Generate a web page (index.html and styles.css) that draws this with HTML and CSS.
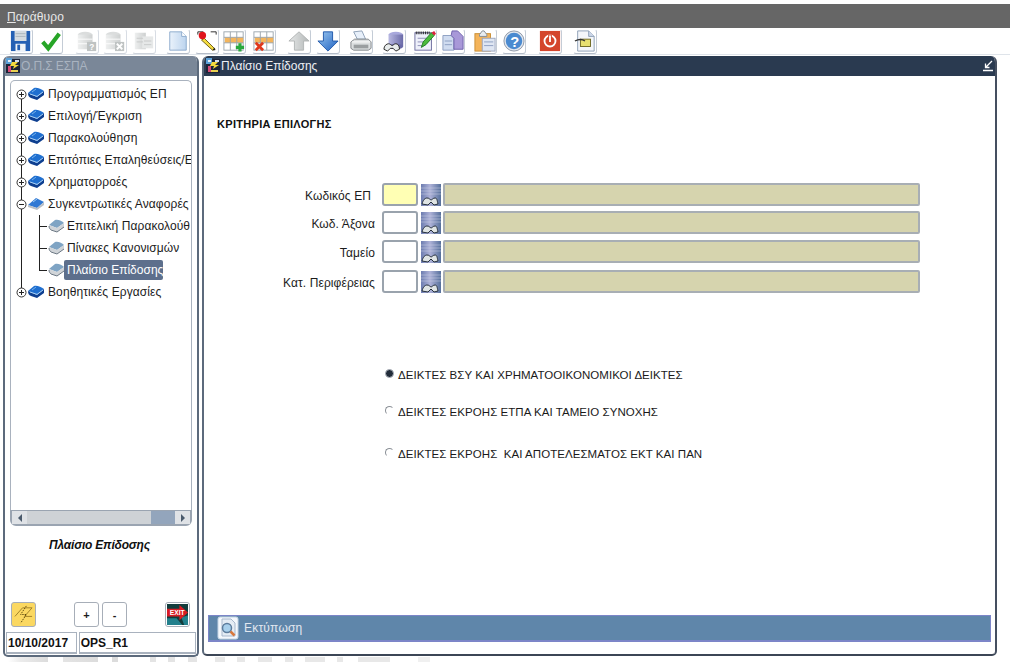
FILE: index.html
```html
<!DOCTYPE html>
<html lang="el">
<head>
<meta charset="utf-8">
<title>Πλαίσιο Επίδοσης</title>
<link rel="stylesheet" href="styles.css">
</head>
<body>
<svg class="defs" aria-hidden="true">
  <defs>
    <linearGradient id="gGrey" x1="0" y1="0" x2="1" y2="0"><stop offset="0" stop-color="#e6e8e8"/><stop offset="1" stop-color="#b4b8b8"/></linearGradient>
    <linearGradient id="gDb" x1="0" y1="0" x2="1" y2="0"><stop offset="0" stop-color="#b9b9e2"/><stop offset="1" stop-color="#6a6aa8"/></linearGradient>
    <linearGradient id="gBlue" x1="0" y1="0" x2="1" y2="1"><stop offset="0" stop-color="#9cc8f0"/><stop offset="1" stop-color="#1c5fc0"/></linearGradient>
    <linearGradient id="gPage" x1="0" y1="0" x2="1" y2="0"><stop offset="0" stop-color="#eaf2fb"/><stop offset="1" stop-color="#bcd4ee"/></linearGradient>
    <linearGradient id="gLook" x1="0" y1="0" x2="1" y2="0"><stop offset="0" stop-color="#6c7cb0"/><stop offset=".45" stop-color="#aeb2d8"/><stop offset="1" stop-color="#56709c"/></linearGradient>
    <symbol id="logo" viewBox="0 0 16 16">
      <rect x="1" y="1" width="14" height="14" fill="#1d2438"/>
      <path d="M1 0h6v6H1Z" fill="#5aa0d8"/>
      <path d="M3 2h3v2H3Z" fill="#e8f0f8"/>
      <path d="M7 4h6l-3 3h4l-6 4 1-3H5Z" fill="#f4d83c"/>
      <path d="M3 8h3v6H3Z" fill="#d84a78"/>
      <path d="M6 12h7v2H6Z" fill="#e8d050"/>
      <path d="M10 2h4v2h-4Z" fill="#d8e0f0"/>
    </symbol>
    <symbol id="book" viewBox="0 0 18 14">
      <path d="M1 6 7 1c3-1 7 1 10 3l-7 6Z" fill="#1f6fd0"/>
      <path d="M1 6c0 3 1 4 3 5l6 2 7-5V4l-7 6Z" fill="#0e3f90"/>
      <path d="M3 7l7 2.400 6-4.400" fill="none" stroke="#a8d0f4"/>
      <path d="M5 5l4-3" stroke="#7ab4ec"/>
    </symbol>
    <symbol id="bookOpen" viewBox="0 0 18 14">
      <path d="M1 8 9 1l8 4-7 6Z" fill="#2f78d4"/>
      <path d="M1 8l9 3 7-6v3l-7 5-9-3Z" fill="#b9bfc6"/>
      <path d="M6 5l4-3" stroke="#9cc8f0"/>
    </symbol>
    <symbol id="page" viewBox="0 0 18 14">
      <path d="M2 6 8 1c3-1 7 1 9 3l-7 5Z" fill="#7fa4c4"/>
      <path d="M2 6l8 3 7-5v4l-7 5-6-2c-2-1-2-3-2-5Z" fill="#d0d4d8"/>
      <path d="M2 7c0 2 1 3 2 4l6 2 7-5" fill="none" stroke="#6c7884"/>
    </symbol>
    <symbol id="plus" viewBox="0 0 11 11">
      <circle cx="5.500" cy="5.500" r="4.500" fill="#fff" stroke="#333"/>
      <path d="M3 5.500h5M5.500 3v5" stroke="#222"/>
    </symbol>
    <symbol id="minus" viewBox="0 0 11 11">
      <circle cx="5.500" cy="5.500" r="4.500" fill="#fff" stroke="#333"/>
      <path d="M3 5.500h5" stroke="#222"/>
    </symbol>
    <symbol id="look" viewBox="0 0 20 22">
      <rect width="20" height="22" fill="url(#gLook)"/>
      <path d="M0 4h20M0 7h20M0 10h20" stroke="#d0d6e8" stroke-width=".7" opacity=".7"/>
      <path d="M1 20c1-4 3-6 5-6 3 0 3 2 4 2s2-2 4-2 2 2 3 6l-4 1-3-3-3 3Z" fill="#dfe4e4" stroke="#26303c" stroke-width="1"/>
    </symbol>
  </defs>
</svg>

<header class="menubar"><span class="menu-label"><u>Π</u>αράθυρο</span></header>

<nav class="toolbar">
  <span class="tb">
    <svg viewBox="0 0 24 24"><path d="M1 1h21v22H1Z" fill="#2460b4"/><rect x="5" y="1" width="13" height="11" fill="#d4dbe0"/><path d="M6 4h11M6 7h11" stroke="#a8b4bc"/><rect x="6" y="15" width="11" height="8" fill="#f0f4f8"/><rect x="8" y="16" width="3" height="6" fill="#2460b4"/></svg>
  </span>
  <span class="tb m6">
    <svg viewBox="0 0 24 24"><path d="M3 13l6 7L21 4" fill="none" stroke="#27a527" stroke-width="4.500"/></svg>
  </span>
  <span class="tb m12 dim">
    <svg viewBox="0 0 24 24"><ellipse cx="10" cy="5" rx="8" ry="3" fill="#c8cccc"/><rect x="2" y="5" width="16" height="16" fill="url(#gGrey)"/><path d="M2 10h16M2 15h16" stroke="#fff"/><rect x="12" y="13" width="10" height="10" fill="#9ea4a4"/><text class="qm" x="14.500" y="22">?</text></svg>
  </span>
  <span class="tb m4 dim">
    <svg viewBox="0 0 24 24"><ellipse cx="10" cy="5" rx="8" ry="3" fill="#c8cccc"/><rect x="2" y="5" width="16" height="16" fill="url(#gGrey)"/><path d="M2 10h16M2 15h16" stroke="#fff"/><rect x="12" y="13" width="10" height="10" fill="#9ea4a4"/><path d="M14 15l6 6M20 15l-6 6" stroke="#fff" stroke-width="2"/></svg>
  </span>
  <span class="tb m5 dim">
    <svg viewBox="0 0 24 24"><rect x="2" y="3" width="12" height="18" fill="url(#gGrey)"/><rect x="10" y="7" width="12" height="13" fill="#dadddd"/><path d="M4 9h7M4 13h7M12 12h8M12 16h8" stroke="#a8acac"/></svg>
  </span>
  <span class="tb m10">
    <svg viewBox="0 0 24 24"><path d="M3 2h13l5 5v15H3Z" fill="url(#gPage)" stroke="#8aa8cc"/><path d="M16 2v5h5" fill="#fff" stroke="#8aa8cc"/></svg>
  </span>
  <span class="tb m5">
    <svg viewBox="0 0 24 24"><path d="M2 5V2h6M16 2h6v3" fill="none" stroke="#222"/><path d="M9 9l12 12-3 1-12-11Z" fill="#f4dc40" stroke="#6a5a10"/><circle cx="7" cy="6" r="4" fill="#e0141c"/><path d="M18 22l3 0-1-3Z" fill="#222"/></svg>
  </span>
  <span class="tb m3">
    <svg viewBox="0 0 24 24"><rect x="1" y="2" width="21" height="20" fill="#fff" stroke="#9aa4ac"/><rect x="2" y="8" width="20" height="6" fill="#f4b55c"/><path d="M8 2v20M15 2v20M1 8h21M1 14h21" stroke="#9aa4ac"/><path d="M14 19h9M18.500 14.500v9" stroke="#2aa83c" stroke-width="3.500"/></svg>
  </span>
  <span class="tb m6">
    <svg viewBox="0 0 24 24"><rect x="1" y="2" width="21" height="20" fill="#fff" stroke="#9aa4ac"/><rect x="2" y="8" width="20" height="6" fill="#f4b55c"/><path d="M8 2v20M15 2v20M1 8h21M1 14h21" stroke="#9aa4ac"/><path d="M3 14l8 8M11 14l-8 8" stroke="#e0381c" stroke-width="3"/></svg>
  </span>
  <span class="tb m11">
    <svg viewBox="0 0 24 24"><path d="M12 2 23 12h-6v10H7V12H1Z" fill="url(#gGrey)" stroke="#b0b4b4"/></svg>
  </span>
  <span class="tb m5">
    <svg viewBox="0 0 24 24"><path d="M7 2h10v10h6L12 23 1 12h6Z" fill="url(#gBlue)" stroke="#1c55a8"/></svg>
  </span>
  <span class="tb m9">
    <svg viewBox="0 0 24 24"><path d="M4 2l9-1 4 9H8Z" fill="#e8f0fa" stroke="#8a9cb4"/><path d="M1 13l4-3h15l3 3v7l-3 2H4l-3-2Z" fill="#dcdfe0" stroke="#7c8084"/><path d="M2 13h20" stroke="#fff"/><rect x="4" y="16" width="16" height="4" fill="#9a9ea0"/></svg>
  </span>
  <span class="tb m9">
    <svg viewBox="0 0 24 24"><ellipse cx="14" cy="5" rx="8" ry="3" fill="#a8a8dc"/><rect x="6" y="5" width="16" height="13" fill="url(#gDb)"/><ellipse cx="14" cy="18" rx="8" ry="3" fill="#6a6aa8"/><path d="M1 21c0-4 3-6 5-6s3 2 4 2 2-2 4-2 4 2 4 6l-4 2-3-3-3 0-3 3Z" fill="#e8ecec" stroke="#222"/></svg>
  </span>
  <span class="tb m7">
    <svg viewBox="0 0 24 24"><rect x="1" y="3" width="18" height="19" fill="#eef0fa" stroke="#6a6a9c"/><path d="M2 3h16" stroke="#222" stroke-width="3" stroke-dasharray="1 1"/><path d="M4 9h10M4 13h7M4 17h7" stroke="#8a8ab4"/><path d="M8 19l2-6 9-10 3 3-9 10Z" fill="#4cbc3c" stroke="#1e7a20"/><path d="M19 3l3 3 2-2-2-3Z" fill="#d8243c"/></svg>
  </span>
  <span class="tb m4">
    <svg viewBox="0 0 24 24"><path d="M1 6h9l3 3v13H1Z" fill="#d0dcf0" stroke="#8a9cc0"/><path d="M11 1l6 0 6 6v14H13V9L10 6Z" fill="#a898d8" stroke="#6a5ca8"/><path d="M3 12h8M3 16h8" stroke="#8a9cc0"/></svg>
  </span>
  <span class="tb m8">
    <svg viewBox="0 0 24 24"><rect x="1" y="4" width="17" height="19" fill="#f4b45a" stroke="#c88c30"/><path d="M6 5l3-4h2l3 4v2H6Z" fill="#e8ecf0" stroke="#808890"/><rect x="9" y="9" width="14" height="14" fill="#dfe6f2" stroke="#9aa4bc"/><path d="M11 13h10M11 17h10" stroke="#8a9cc0"/></svg>
  </span>
  <span class="tb m5">
    <svg viewBox="0 0 24 24"><circle cx="12" cy="12" r="11" fill="#e0e6ee" stroke="#8a94a4"/><circle cx="12" cy="12" r="9" fill="#4a8ad0"/><text class="help" x="8" y="18">?</text></svg>
  </span>
  <span class="tb m12">
    <svg viewBox="0 0 24 24"><rect x="1" y="1" width="22" height="22" fill="#d4452c"/><circle cx="12" cy="12" r="6" fill="none" stroke="#fff" stroke-width="2"/><path d="M12 5v8" stroke="#d4452c" stroke-width="4"/><path d="M12 6v7" stroke="#fff" stroke-width="2"/></svg>
  </span>
  <span class="tb m11">
    <svg viewBox="0 0 24 24"><path d="M4 1h12l6 6v16H4Z" fill="#f4f6fa" stroke="#8a9cb4"/><path d="M16 1v6h6" fill="#cdd8ea" stroke="#8a9cb4"/><rect x="7" y="10" width="11" height="8" fill="#e8e070" stroke="#6a6420"/><path d="M1 12c4-2 8-2 11 0" fill="none" stroke="#333" stroke-width="1.500"/></svg>
  </span>
</nav>

<main class="desktop">
  <section class="win win-left">
    <div class="titlebar titlebar-off">
      <svg class="logo"><use href="#logo"/></svg>
      <span>Ο.Π.Σ ΕΣΠΑ</span>
    </div>
    <div class="left-body">
      <div class="tree">
        <ul class="tree-list">
          <li class="node"><svg class="exp"><use href="#plus"/></svg><svg class="ic"><use href="#book"/></svg><span class="lbl">Προγραμματισμός ΕΠ</span></li>
          <li class="node"><svg class="exp"><use href="#plus"/></svg><svg class="ic"><use href="#book"/></svg><span class="lbl">Επιλογή/Έγκριση</span></li>
          <li class="node"><svg class="exp"><use href="#plus"/></svg><svg class="ic"><use href="#book"/></svg><span class="lbl">Παρακολούθηση</span></li>
          <li class="node"><svg class="exp"><use href="#plus"/></svg><svg class="ic"><use href="#book"/></svg><span class="lbl">Επιτόπιες Επαληθεύσεις/Ε</span></li>
          <li class="node"><svg class="exp"><use href="#plus"/></svg><svg class="ic"><use href="#book"/></svg><span class="lbl">Χρηματορροές</span></li>
          <li class="node"><svg class="exp"><use href="#minus"/></svg><svg class="ic"><use href="#bookOpen"/></svg><span class="lbl">Συγκεντρωτικές Αναφορές</span></li>
          <li class="node child"><svg class="ic"><use href="#page"/></svg><span class="lbl">Επιτελική Παρακολούθ</span></li>
          <li class="node child"><svg class="ic"><use href="#page"/></svg><span class="lbl">Πίνακες Κανονισμών</span></li>
          <li class="node child last"><svg class="ic"><use href="#page"/></svg><span class="lbl sel">Πλαίσιο Επίδοσης</span></li>
          <li class="node"><svg class="exp"><use href="#plus"/></svg><svg class="ic"><use href="#book"/></svg><span class="lbl">Βοηθητικές Εργασίες</span></li>
        </ul>
      </div>
      <div class="hscroll">
        <span class="arrow"><i class="tri tri-l"></i></span>
        <span class="track"></span>
        <span class="thumb"></span>
        <span class="arrow"><i class="tri tri-r"></i></span>
      </div>
      <p class="current">Πλαίσιο Επίδοσης</p>
      <div class="actions">
        <span class="btn btn-yellow">
          <svg viewBox="0 0 22 22"><path d="M2 13 10 4h10l-8 9h8" fill="none" stroke="#a08028"/><path d="M14 2 8 11h6l-6 9" fill="none" stroke="#604c10" stroke-dasharray="1.500 1"/></svg>
        </span>
        <span class="btn btn-txt btn-plus">+</span>
        <span class="btn btn-txt">-</span>
        <span class="btn btn-exit">
          <svg viewBox="0 0 22 22"><rect width="22" height="22" fill="#123c3c"/><path d="M0 15h10l6 7H0ZM15 14l7-2v10h-4Z" fill="#22808c"/><path d="M0 5h13V1l9 8-9 8v-4H0Z" fill="#d81c24"/><text class="exit-txt" x="3" y="12">EXIT</text></svg>
        </span>
      </div>
      <div class="status">
        <span class="st st-date">10/10/2017</span>
        <span class="st st-user">OPS_R1</span>
      </div>
    </div>
  </section>

  <section class="win win-right">
    <div class="titlebar">
      <svg class="logo"><use href="#logo"/></svg>
      <span>Πλαίσιο Επίδοσης</span>
      <svg class="restore" viewBox="0 0 12 12"><path d="M10 1 4 7M3.500 3.500v4h4" fill="none" stroke="#fff" stroke-width="1.300"/><path d="M1 10.500h10" stroke="#fff" stroke-width="1.500"/></svg>
    </div>
    <div class="right-body">
      <h1 class="heading">ΚΡΙΤΗΡΙΑ ΕΠΙΛΟΓΗΣ</h1>
      <div class="form">
        <div class="row"><label class="flabel flabel-first">Κωδικός ΕΠ</label><span class="inp inp-req"></span><svg class="lov"><use href="#look"/></svg><span class="desc"></span></div>
        <div class="row r2"><label class="flabel">Κωδ. Άξονα</label><span class="inp"></span><svg class="lov"><use href="#look"/></svg><span class="desc"></span></div>
        <div class="row r3"><label class="flabel">Ταμείο</label><span class="inp"></span><svg class="lov"><use href="#look"/></svg><span class="desc"></span></div>
        <div class="row r4"><label class="flabel">Κατ. Περιφέρειας</label><span class="inp"></span><svg class="lov"><use href="#look"/></svg><span class="desc"></span></div>
      </div>
      <div class="radios">
        <div class="radio"><i class="dot on"></i><span>ΔΕΙΚΤΕΣ ΒΣΥ ΚΑΙ ΧΡΗΜΑΤΟΟΙΚΟΝΟΜΙΚΟΙ ΔΕΙΚΤΕΣ</span></div>
        <div class="radio rb"><i class="dot"></i><span>ΔΕΙΚΤΕΣ ΕΚΡΟΗΣ ΕΤΠΑ ΚΑΙ ΤΑΜΕΙΟ ΣΥΝΟΧΗΣ</span></div>
        <div class="radio rc"><i class="dot"></i><span>ΔΕΙΚΤΕΣ ΕΚΡΟΗΣ&nbsp; ΚΑΙ ΑΠΟΤΕΛΕΣΜΑΤΟΣ ΕΚΤ ΚΑΙ ΠΑΝ</span></div>
      </div>
      <div class="printbar">
        <svg class="print-ic" viewBox="0 0 22 24"><rect x="1" y="1" width="20" height="22" rx="2" fill="#f4f8fc" stroke="#c4d4e4"/><path d="M5 3h9l4 4v13H5Z" fill="#e4ecf4" stroke="#a8b8cc"/><circle cx="10" cy="12" r="4.500" fill="#a8d0ec" stroke="#5c7c9c" stroke-width="1.500"/><path d="M13.500 15.500l4 4" stroke="#d8783c" stroke-width="2.500"/></svg>
        <span>Εκτύπωση</span>
      </div>
    </div>
  </section>
</main>
<div class="strip"></div>
</body>
</html>
```
FILE: styles.css
```css
* { box-sizing: border-box; }
html, body { margin: 0; height: 662px; overflow: hidden; background: #fff; }
body { font: 12px "Liberation Sans", Arial, sans-serif; color: #1c1c1c; display: flex; flex-direction: column; }
.defs { width: 0; height: 0; position: absolute; }

.menubar { margin-top: 4px; height: 24px; background: #666; color: #e8e8e8; display: flex; align-items: center; padding: 2px 0 0 7px; flex: none; }
.menu-label { font-size: 12px; letter-spacing: .1px; }

.toolbar { height: 27px; flex: none; display: flex; align-items: center; padding-left: 9px; border-bottom: 1px solid #dfe4ea; }
.tb { width: 24px; height: 25px; flex: none; border: 1px solid transparent; border-right-color: #c4ccd6; border-bottom-color: #b4bcc8; border-radius: 3px; display: flex; align-items: center; justify-content: center; }
.tb svg { width: 22px; height: 22px; display: block; }
.dim { opacity: .65; }
.m3 { margin-left: 3px; } .m4 { margin-left: 4px; } .m5 { margin-left: 5px; } .m6 { margin-left: 6px; }
.m7 { margin-left: 7px; } .m8 { margin-left: 8px; } .m9 { margin-left: 9px; } .m10 { margin-left: 10px; }
.m11 { margin-left: 11px; } .m12 { margin-left: 12px; }
.qm { font: bold 9px "Liberation Sans", sans-serif; fill: #fff; }
.help { font: bold 16px "Liberation Sans", sans-serif; fill: #fff; }
.exit-txt { font: bold 7px "Liberation Sans", sans-serif; fill: #fff; }

.desktop { flex: none; height: 602px; display: flex; gap: 3px; padding: 1px 0 0 3px; }
.win { display: flex; flex-direction: column; background: #fff; border: 2px solid #5c6a7c; border-top: 0; border-radius: 6px 6px 5px 5px; overflow: hidden; }
.win-left { width: 196px; height: 601px; }
.win-right { width: 795px; height: 600px; border-right-color: #454f60; border-bottom-color: #3c4656; }

.titlebar { height: 20px; flex: none; background: #2a3a50; color: #eef0f4; display: flex; align-items: center; gap: 0; padding-left: 1px; }
.titlebar-off { background: #7a8798; color: #a9b3c0; padding-left: 0; letter-spacing: -.1px; }
.logo { width: 16px; height: 16px; flex: none; }
.restore { width: 12px; height: 12px; margin-left: auto; margin-right: 1px; }

.left-body { flex: 1; display: flex; flex-direction: column; padding: 4px 1px 1px; min-height: 0; }
.tree { margin: 0 4px; height: 430px; border: 1px solid #a9b2be; border-bottom: 0; border-radius: 5px 5px 0 0; overflow: hidden; flex: none; padding-top: 2px; }
.tree-list { list-style: none; margin: 0; padding: 0; position: relative; }
.tree-list::before { content: ""; position: absolute; left: 10px; top: 12px; height: 198px; border-left: 1px solid #222; }
.node { height: 22px; display: flex; align-items: center; white-space: nowrap; position: relative; padding-left: 5px; }
.exp { width: 11px; height: 11px; flex: none; position: relative; }
.ic { width: 18px; height: 14px; flex: none; position: relative; }
.lbl { margin-left: 2px; padding: 0 1px; letter-spacing: .1px; height: 20px; line-height: 20px; font-size: 12px; }
.child { padding-left: 36px; }
.child .lbl { margin-left: -1px; padding-left: 3px; }
.child::before { content: ""; position: absolute; left: 28px; top: 11px; width: 8px; border-top: 1px solid #222; }
.child::after { content: ""; position: absolute; left: 28px; top: 0; height: 22px; border-left: 1px solid #222; }
.last::after { height: 12px; }
.sel { background: #5d6f8c; color: #fff; border-radius: 2px; letter-spacing: 0; padding-right: 0; }

.hscroll { margin: 0 4px; height: 16px; flex: none; display: flex; background: #cfd3d7; border: 2px solid #9aa4b1; border-top-width: 1px; border-radius: 0 0 6px 6px; }
.arrow { width: 15px; background: #dfe2e6; display: flex; align-items: center; justify-content: center; }
.track { flex: 1; background: #ced2d6; }
.thumb { width: 24px; background: #93a5bc; }
.tri { width: 0; height: 0; border: 4px solid transparent; }
.tri-l { border-right-color: #4a5a6c; border-left: 0; }
.tri-r { border-left-color: #4a5a6c; border-right: 0; }

.current { margin: 12px 0 0; text-align: center; font: italic bold 12px "Liberation Sans", sans-serif; letter-spacing: -.2px; color: #111; height: 14px; line-height: 14px; padding-right: 3px; }
.actions { display: flex; margin: 50px 0 0 5px; flex: none; }
.btn { width: 25px; height: 25px; border: 1px solid #a7aeb8; border-radius: 3px; display: flex; align-items: center; justify-content: center; flex: none; background: #fff; }
.btn svg { width: 21px; height: 21px; display: block; }
.btn-yellow { background: #fbd861; }
.btn-txt { margin-left: 3px; font-weight: bold; font-size: 11px; }
.btn-txt.btn-plus { margin-left: 38px; }
.btn-exit { margin-left: 38px; }
.status { margin: 5px 0 0; display: flex; gap: 2px; flex: none; }
.st { height: 22px; border: 1px solid #a9b2be; border-bottom: 2px solid #a9b2be; font-weight: bold; font-size: 12px; line-height: 20px; padding-left: 1px; color: #111; }
.st-date { width: 71px; }
.st-user { width: 118px; }

.right-body { flex: 1; display: flex; flex-direction: column; padding-left: 13px; min-height: 0; }
.heading { margin: 41px 0 0; font-size: 11px; line-height: 14px; height: 14px; font-weight: bold; color: #111; letter-spacing: .3px; }
.form { margin-top: 52px; }
.row { display: flex; align-items: center; height: 23px; }
.r2 { margin-top: 5px; }
.r3 { margin-top: 6px; }
.r4 { margin-top: 7px; }
.flabel { width: 158px; text-align: right; white-space: nowrap; letter-spacing: .1px; padding-top: 3px; }
.flabel-first { padding-right: 4px; }
.inp { width: 36px; height: 23px; margin-left: 7px; border: 2px solid #9aa3ad; border-radius: 3px; background: #fff; flex: none; }
.inp-req { background: #ffffb4; }
.lov { width: 20px; height: 22px; margin-left: 3px; flex: none; }
.desc { width: 477px; height: 23px; margin-left: 2px; background: #d6d4ae; border: 2px solid #a8aeb4; border-radius: 2px; flex: none; }
.radios { margin: 75px 0 0 168px; }
.radio { display: flex; align-items: center; height: 14px; gap: 4px; font-size: 11.500px; letter-spacing: .05px; white-space: nowrap; color: #1a1a1a; }
.rb { margin-top: 23px; }
.rc { margin-top: 28px; }
.dot { width: 9px; height: 9px; flex: none; border-radius: 50%; border: 1px solid transparent; border-top-color: #8a8f96; border-left-color: #8a8f96; margin-top: -3px; }
.dot.on { background: #222c3a; border-color: #b0b6be; }
.printbar { margin: 154px 0 0 -9px; width: 783px; height: 27px; flex: none; background: #5f86aa; border: 1px solid #7c85c8; border-width: 1px 1px 2px 1px; display: flex; align-items: center; padding-left: 8px; color: #e2e8f0; letter-spacing: .2px; }
.print-ic { width: 22px; height: 24px; flex: none; }
.printbar span { margin-left: 5px; }

.strip { flex: 1; background:
  linear-gradient(90deg, #fff 8px, #ececec 20px, #dcdcdc 48px, #fff 48px, #fff 63px, #e4e4e4 63px, #dcdcdc 98px, #fff 98px, #fff 112px, #dcdcdc 112px, #dcdcdc 118px, #fff 118px, #fff 150px, #e4e4e4 150px, #e4e4e4 156px, #fff 156px, #fff 168px, #e4e4e4 168px, #e4e4e4 175px, #fff 175px, #fff 188px, #e4e4e4 188px, #e4e4e4 197px, #fff 197px, #fff 215px, #e8e8e8 215px, #e8e8e8 225px, #fff 225px, #fff 237px, #e8e8e8 237px, #e8e8e8 245px, #fff 245px, #fff 258px, #e8e8e8 258px, #e8e8e8 272px, #fff 272px, #fff 285px, #e8e8e8 285px, #e8e8e8 293px, #fff 293px, #fff 305px, #e8e8e8 305px, #e8e8e8 325px, #fff 325px, #fff 337px, #e8e8e8 337px, #e8e8e8 343px, #fff 343px, #fff 358px, #e8e8e8 358px, #e8e8e8 390px, #fff 390px, #fff 418px, #f0f0f0 418px, #f0f0f0 430px, #fff 430px); }
```
